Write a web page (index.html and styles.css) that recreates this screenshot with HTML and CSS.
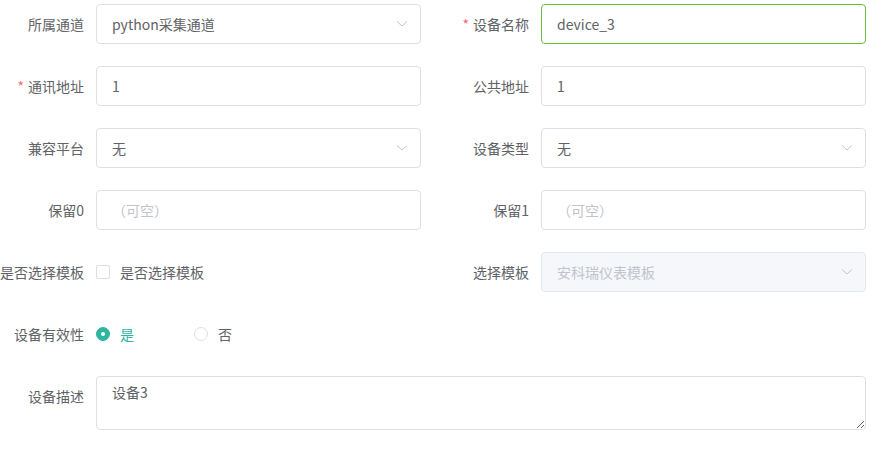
FILE: index.html
```html
<!DOCTYPE html>
<html lang="zh-CN">
<head>
    <meta charset="UTF-8">
    <meta name="viewport" content="width=device-width, initial-scale=1.0">
    <title>设备编辑</title>
    <link rel="stylesheet" href="styles.css">
</head>
<body>
    <form class="device-form">
        <div class="form-item">
            <label class="form-label">所属通道</label>
            <div class="select">
                <span class="select-value">python采集通道</span>
                <svg class="arrow" width="12" height="8" viewBox="0 0 12 8"><path d="M1 1.5 L6 6 L11 1.5" fill="none" stroke="#c0c4cc" stroke-width="1"/></svg>
            </div>
        </div>
        <div class="form-item">
            <label class="form-label required">设备名称</label>
            <input class="input is-focus" type="text" value="device_3">
        </div>

        <div class="form-item">
            <label class="form-label required">通讯地址</label>
            <input class="input" type="text" value="1">
        </div>
        <div class="form-item">
            <label class="form-label">公共地址</label>
            <input class="input" type="text" value="1">
        </div>

        <div class="form-item">
            <label class="form-label">兼容平台</label>
            <div class="select">
                <span class="select-value">无</span>
                <svg class="arrow" width="12" height="8" viewBox="0 0 12 8"><path d="M1 1.5 L6 6 L11 1.5" fill="none" stroke="#c0c4cc" stroke-width="1"/></svg>
            </div>
        </div>
        <div class="form-item">
            <label class="form-label">设备类型</label>
            <div class="select">
                <span class="select-value">无</span>
                <svg class="arrow" width="12" height="8" viewBox="0 0 12 8"><path d="M1 1.5 L6 6 L11 1.5" fill="none" stroke="#c0c4cc" stroke-width="1"/></svg>
            </div>
        </div>

        <div class="form-item">
            <label class="form-label">保留0</label>
            <input class="input" type="text" placeholder="（可空）">
        </div>
        <div class="form-item">
            <label class="form-label">保留1</label>
            <input class="input" type="text" placeholder="（可空）">
        </div>

        <div class="form-item">
            <label class="form-label">是否选择模板</label>
            <div class="check">
                <span class="check-box"></span>
                <span class="check-text">是否选择模板</span>
            </div>
        </div>
        <div class="form-item">
            <label class="form-label">选择模板</label>
            <div class="select is-disabled">
                <span class="select-value">安科瑞仪表模板</span>
                <svg class="arrow" width="12" height="8" viewBox="0 0 12 8"><path d="M1 1.5 L6 6 L11 1.5" fill="none" stroke="#c0c4cc" stroke-width="1"/></svg>
            </div>
        </div>

        <div class="form-item">
            <label class="form-label">设备有效性</label>
            <div class="radio-group">
                <span class="radio is-checked"><span class="radio-dot"></span>是</span>
                <span class="radio"><span class="radio-dot"></span>否</span>
            </div>
        </div>
        <div class="form-item"></div>

        <div class="form-item full">
            <label class="form-label">设备描述</label>
            <textarea class="textarea">设备3</textarea>
        </div>
    </form>
</body>
</html>
```

FILE: styles.css
```css
body {
    margin: 0;
    padding-top: 4px;
    background: #fff;
    font-family: "Noto Sans CJK SC", "Noto Sans", sans-serif;
    font-size: 14px;
    color: #606266;
}
.device-form {
    display: grid;
    grid-template-columns: 421px 421px;
    column-gap: 24px;
    row-gap: 22px;
}
.form-item {
    display: flex;
    align-items: center;
    min-height: 40px;
}
.form-item.full {
    grid-column: 1 / 3;
    align-items: flex-start;
}
.form-label {
    flex: none;
    width: 96px;
    padding-right: 12px;
    box-sizing: border-box;
    text-align: right;
    line-height: 40px;
    white-space: nowrap;
}
.required::before {
    content: "*";
    color: #f56c6c;
    margin-right: 4px;
}
.input, .select {
    flex: 1;
    height: 40px;
    box-sizing: border-box;
    border: 1px solid #dcdfe6;
    border-radius: 4px;
    padding: 0 15px;
    font: inherit;
    color: #606266;
    background: #fff;
    outline: none;
}
.input::placeholder {
    color: #c0c4cc;
}
.input.is-focus {
    border-color: #67c23a;
}
.select {
    display: flex;
    align-items: center;
    justify-content: space-between;
    padding-right: 12px;
}
.select.is-disabled {
    background: #f5f7fa;
    border-color: #e4e7ed;
    color: #c0c4cc;
}
.arrow {
    display: block;
}
.check {
    display: flex;
    align-items: center;
}
.check-box {
    width: 14px;
    height: 14px;
    box-sizing: border-box;
    border: 1px solid #dcdfe6;
    border-radius: 2px;
    margin-right: 10px;
}
.radio-group {
    display: flex;
    align-items: center;
    gap: 60px;
}
.radio {
    display: flex;
    align-items: center;
}
.radio-dot {
    width: 14px;
    height: 14px;
    box-sizing: border-box;
    border: 1px solid #dcdfe6;
    border-radius: 50%;
    margin-right: 10px;
    position: relative;
}
.radio.is-checked {
    color: #2fb59f;
}
.radio.is-checked .radio-dot {
    border-color: #2fb59f;
    background: #2fb59f;
}
.radio.is-checked .radio-dot::after {
    content: "";
    position: absolute;
    left: 4px;
    top: 4px;
    width: 4px;
    height: 4px;
    border-radius: 50%;
    background: #fff;
}
.textarea {
    flex: 1;
    height: 54px;
    box-sizing: border-box;
    border: 1px solid #dcdfe6;
    border-radius: 4px;
    padding: 5px 15px;
    font: inherit;
    line-height: 1.5;
    color: #606266;
    resize: vertical;
    outline: none;
}
```
